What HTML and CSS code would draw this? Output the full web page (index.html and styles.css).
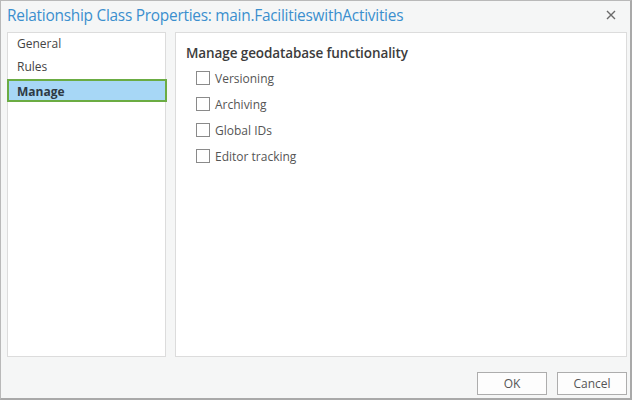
FILE: index.html
```html
<!DOCTYPE html>
<html>
<head>
<meta charset="utf-8">
<link rel="stylesheet" href="styles.css">
</head>
<body>
<div class="dialog">
  <div class="titlebar">
    <div class="title">Relationship Class Properties: main.FacilitieswithActivities</div>
    <div class="close"><svg width="10" height="10" viewBox="0 0 10 10"><path d="M1 1L9 9M9 1L1 9" stroke="#6a6a6a" stroke-width="1.4"/></svg></div>
  </div>
  <div class="body">
    <div class="nav">
      <div class="nav-item">General</div>
      <div class="nav-item">Rules</div>
      <div class="nav-item active">Manage</div>
    </div>
    <div class="content">
      <div class="heading">Manage geodatabase functionality</div>
      <div class="option"><span class="box"></span><span>Versioning</span></div>
      <div class="option"><span class="box"></span><span>Archiving</span></div>
      <div class="option"><span class="box"></span><span>Global IDs</span></div>
      <div class="option"><span class="box"></span><span>Editor tracking</span></div>
    </div>
  </div>
  <div class="footer">
    <button class="btn">OK</button>
    <button class="btn">Cancel</button>
  </div>
</div>
</body>
</html>
```
FILE: styles.css
```css
html, body {
  margin: 0;
  padding: 0;
}
body {
  width: 632px;
  height: 400px;
  background: #f5f6f6;
  font-family: "Open Sans", "Noto Sans", sans-serif;
  color: #444;
}
.dialog {
  box-sizing: border-box;
  width: 632px;
  height: 400px;
  border: 1px solid #b9b9b9;
  border-right: 2px solid #a9a9a9;
  border-bottom: 2px solid #a9a9a9;
  background: #f5f6f6;
  display: flex;
  flex-direction: column;
}
.titlebar {
  height: 31px;
  display: flex;
  align-items: center;
  justify-content: space-between;
  padding: 0 14px 0 6px;
}
.title {
  color: #3b8fce;
  font-size: 15.4px;
  letter-spacing: -0.25px;
  margin-top: -3px;
}
.close {
  display: flex;
  margin-top: -4px;
}
.body {
  display: flex;
  gap: 9px;
  padding: 0 3px 0 6px;
  height: 325px;
}
.nav {
  width: 159px;
  background: #fff;
  border: 1px solid #dcdcdc;
  padding-top: 0;
  box-sizing: border-box;
}
.nav-item {
  font-size: 12px;
  color: #444;
  height: 23px;
  line-height: 21px;
  padding-left: 9px;
  box-sizing: border-box;
}
.nav-item.active {
  background: #a7d7f6;
  border: 2px solid #6bac43;
  margin-left: -1px;
  width: 160px;
  padding-left: 8px;
  font-weight: 700;
  color: #2e3a44;
}
.content {
  flex: 1;
  background: #fff;
  border: 1px solid #dcdcdc;
  padding: 11px 10px 0 10px;
}
.heading {
  font-size: 13.5px;
  font-weight: 600;
  color: #3c3c3c;
  letter-spacing: -0.1px;
  margin-bottom: 3px;
}
.option {
  display: flex;
  align-items: center;
  gap: 5px;
  height: 26px;
  padding-left: 10px;
  font-size: 12px;
  color: #555;
}
.box {
  width: 12px;
  height: 12px;
  border: 1px solid #8a8a8a;
  background: #fff;
  flex: none;
}
.footer {
  flex: 1;
  display: flex;
  justify-content: flex-end;
  align-items: center;
  gap: 10px;
  padding: 11px 3px 0 0;
}
.btn {
  width: 70px;
  height: 23px;
  border: 1px solid #adadad;
  background: #fdfdfd;
  font-family: "Open Sans", "Noto Sans", sans-serif;
  font-size: 12px;
  color: #555;
  padding: 0;
}
```
